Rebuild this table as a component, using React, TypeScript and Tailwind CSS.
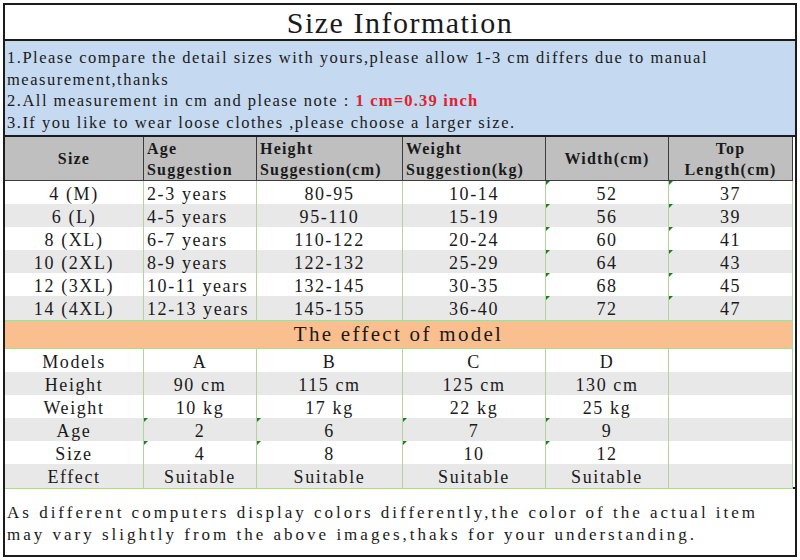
const sizeRows = [
  ['4 (M)', '2-3 years', '80-95', '10-14', '52', '37'],
  ['6 (L)', '4-5 years', '95-110', '15-19', '56', '39'],
  ['8 (XL)', '6-7 years', '110-122', '20-24', '60', '41'],
  ['10 (2XL)', '8-9 years', '122-132', '25-29', '64', '43'],
  ['12 (3XL)', '10-11 years', '132-145', '30-35', '68', '45'],
  ['14 (4XL)', '12-13 years', '145-155', '36-40', '72', '47'],
]

const modelRows = [
  ['Models', 'A', 'B', 'C', 'D', ''],
  ['Height', '90 cm', '115 cm', '125 cm', '130 cm', ''],
  ['Weight', '10 kg', '17 kg', '22 kg', '25 kg', ''],
  ['Age', '2', '6', '7', '9', ''],
  ['Size', '4', '8', '10', '12', ''],
  ['Effect', 'Suitable', 'Suitable', 'Suitable', 'Suitable', ''],
]

const grid = 'grid w-[788px] grid-cols-[139px_113px_146px_143px_123px_124px]'

// little green "number stored as text" marker, like in Excel
function Marker() {
  return (
    <span className="absolute left-0 top-0 h-0 w-0 border-t-[4px] border-r-[4px] border-t-[#1f7d1f] border-r-transparent" />
  )
}

function Row({ cells, index, marks, leftCol }: { cells: string[]; index: number; marks: number[]; leftCol?: number }) {
  const bg = index % 2 === 1 ? 'bg-[#e8e8e8]' : 'bg-white'
  return (
    <div className={`${grid} h-[23px]`}>
      {cells.map((c, i) => (
        <div
          key={i}
          className={`relative flex items-center ${i === leftCol ? 'justify-start pl-[3px]' : 'justify-center'} border-r border-b border-[#b3d59b] ${bg} text-[18px] leading-[22px] tracking-[1.6px] whitespace-nowrap pt-[2px]`}
        >
          {marks.includes(i) && <Marker />}
          {c}
        </div>
      ))}
    </div>
  )
}

export default function App() {
  return (
    <div className="w-[800px] h-[560px] bg-white p-[3px] font-['Liberation_Serif','Noto_Sans_CJK_SC',serif] text-[#1a1a1a]">
      <div className="h-full border-2 border-[#1b1b1b] flex flex-col">
        {/* Title */}
        <div className="h-[36px] border-b-2 border-[#1b1b1b] flex items-center justify-center text-[30px] tracking-[1.5px] leading-none pt-[1px]">
          Size Information
        </div>

        {/* Notes */}
        <div className="h-[96px] border-b-2 border-[#1b1b1b] bg-[#c5d9f0] pl-[2px] pt-[6px] text-[16.5px] leading-[21.7px] tracking-[1.5px] whitespace-nowrap">
          <div>1.Please compare the detail sizes with yours,please allow 1-3 cm differs due to manual</div>
          <div>measurement,thanks</div>
          <div>
            2.All measurement in cm and please note : <span className="text-[#e3202b] font-bold tracking-[1.2px]">1 cm=0.39 inch</span>
          </div>
          <div>3.If you like to wear loose clothes ,please choose a larger size.</div>
        </div>

        {/* Header */}
        <div className={`${grid} h-[44px] text-[16px] font-bold leading-[21px] tracking-[1.2px]`}>
          <div className="flex items-center justify-center bg-[#bfbfbf] border-r border-b border-[#3c3c3c]">Size</div>
          <div className="flex flex-col justify-center pl-[3px] bg-[#bfbfbf] border-r border-b border-[#3c3c3c]">
            <span>Age</span>
            <span>Suggestion</span>
          </div>
          <div className="flex flex-col justify-center pl-[3px] bg-[#bfbfbf] border-r border-b border-[#3c3c3c]">
            <span>Height</span>
            <span>Suggestion(cm)</span>
          </div>
          <div className="flex flex-col justify-center pl-[3px] bg-[#bfbfbf] border-r border-b border-[#3c3c3c]">
            <span>Weight</span>
            <span>Suggestion(kg)</span>
          </div>
          <div className="flex items-center justify-center bg-[#bfbfbf] border-r border-b border-[#3c3c3c]">Width(cm)</div>
          <div className="flex flex-col items-center justify-center bg-[#bfbfbf] border-r border-b border-[#3c3c3c]">
            <span>Top</span>
            <span>Length(cm)</span>
          </div>
        </div>

        {sizeRows.map((r, i) => (
          <Row key={i} cells={r} index={i} marks={[4, 5]} leftCol={1} />
        ))}

        {/* Model section */}
        <div className="w-[788px] h-[30px] bg-[#fabf8f] border-r border-b border-[#b3d59b] flex items-center justify-center text-[21px] tracking-[2.3px] pt-[3px]">
          The effect of model
        </div>

        {modelRows.map((r, i) => (
          <Row key={i} cells={r} index={i} marks={i === 3 || i === 4 ? [1, 2, 3, 4] : []} />
        ))}

        {/* Footer note */}
        <div className="flex-1 border-t-2 border-[#1b1b1b] pl-[2px] pt-[13px] text-[17px] leading-[22px] tracking-[3px] whitespace-nowrap">
          <div>As different computers display colors differently,the color of the actual item</div>
          <div>may vary slightly from the above images,thaks for your understanding.</div>
        </div>
      </div>
    </div>
  )
}
